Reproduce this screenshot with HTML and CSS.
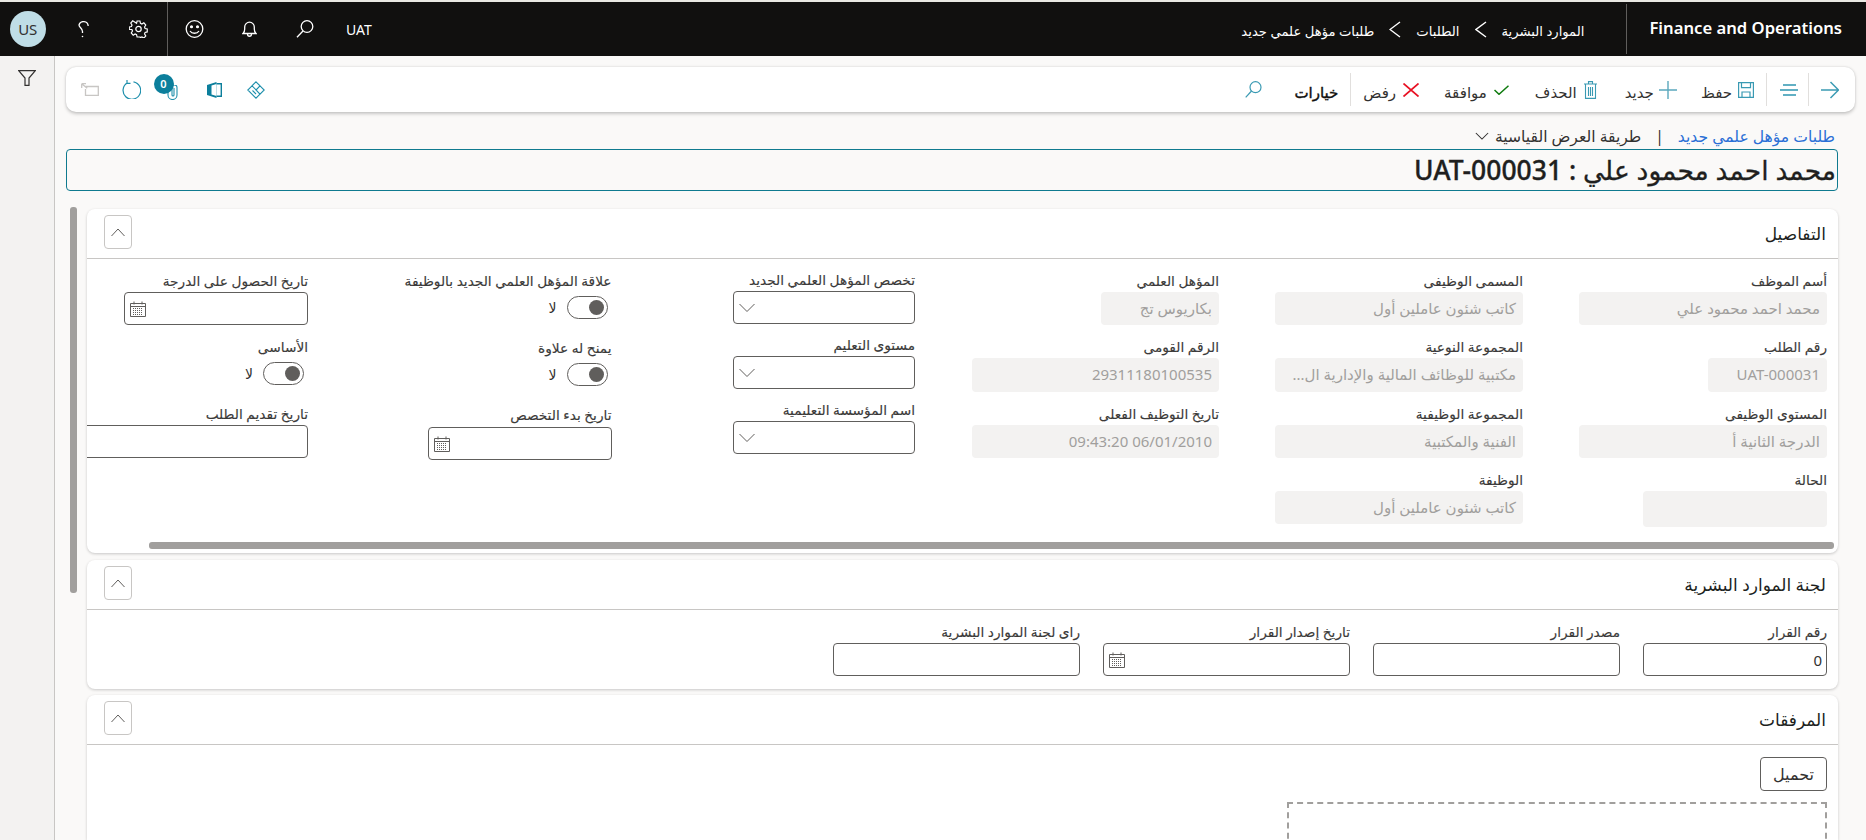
FILE: index.html
```html
<!DOCTYPE html>
<html lang="ar" dir="rtl">
<head>
<meta charset="utf-8">
<title>طلبات مؤهل علمي جديد</title>
<link rel="stylesheet" href="styles.css">
</head>
<body>
<svg class="defs" width="0" height="0" aria-hidden="true">
  <symbol id="cal" viewBox="0 0 16 16"><path d="M.5 2.5h15v13H.5zM.5 5.5h15M4 .5v3M12 .5v3" fill="none" stroke="currentColor"/><path d="M3 7.5h10M3 9.5h10M3 11.5h10M3 13.5h10" fill="none" stroke="currentColor" stroke-dasharray="1 1"/></symbol>
  <symbol id="down" viewBox="0 0 16 10"><path d="M.5 1 8 8.5 15.5 1" fill="none" stroke="currentColor"/></symbol>
  <symbol id="up" viewBox="0 0 14 9"><path d="M.5 8 7 1l6.500 7" fill="none" stroke="currentColor"/></symbol>
</svg>

<header class="topbar">
  <div class="brand">Finance and Operations</div>
  <nav class="crumbs">
    <span>الموارد البشرية</span>
    <svg class="crumb-chev" viewBox="0 0 12 17"><path d="M11 1 1 8.500 11 16" fill="none" stroke="currentColor" stroke-width="1.400"/></svg>
    <span>الطلبات</span>
    <svg class="crumb-chev" viewBox="0 0 12 17"><path d="M11 1 1 8.500 11 16" fill="none" stroke="currentColor" stroke-width="1.400"/></svg>
    <span>طلبات مؤهل علمي جديد</span>
  </nav>
  <div class="sys">
    <span class="env">UAT</span>
    <span class="sys-cell"><svg width="18" height="18" viewBox="0 0 18 18" fill="none" stroke="currentColor" stroke-width="1.300"><circle cx="11" cy="6.500" r="5.800"/><path d="M7 11 1 17.300"/></svg></span>
    <span class="sys-cell"><svg width="15" height="16" viewBox="0 0 15 16" fill="none" stroke="currentColor" stroke-width="1.300"><path d="M1 12.500c1.400-1.200 1.700-2.500 1.700-4.500V6a4.800 4.800 0 0 1 9.600 0v2c0 2 .3 3.300 1.700 4.500zM5.500 13c0 3 4 3 4 0"/></svg></span>
    <span class="sys-cell sys-rule"><svg width="19" height="18" viewBox="0 0 19 18" fill="none" stroke="currentColor" stroke-width="1.300"><circle cx="9.500" cy="9" r="8.300"/><circle cx="6.500" cy="6.800" r=".9" fill="currentColor"/><circle cx="12.500" cy="6.800" r=".9" fill="currentColor"/><path d="M5 11c2 3 7 3 9 0"/></svg></span>
    <span class="sys-cell"><svg width="19" height="18" viewBox="0 0 19 18" fill="none" stroke="currentColor" stroke-width="1.200"><circle cx="9.500" cy="9" r="2.700"/><path d="M8 1h3l.5 2.300 1.500.7 2-1.200 2 2.200-1.300 2 .6 1.500 2.200.5v2.900l-2.200.5-.6 1.500 1.300 2-2 2.200-2-1.200-1.500.7L11 17H8l-.5-2.300-1.500-.7-2 1.200-2-2.200 1.300-2-.6-1.500L0 9.500V7l2.200-.5.6-1.500-1.300-2 2-2.200 2 1.200L7.500 3.300z" transform="translate(.3 0) scale(.97 1)"/></svg></span>
    <span class="sys-cell"><svg width="11" height="17" viewBox="0 0 11 17" fill="none" stroke="currentColor" stroke-width="1.300"><path d="M10.200 5A4.700 4.700 0 0 0 1 4c0 2.500 3.500 3.300 3.500 6.500V12"/><circle cx="4.500" cy="15.500" r=".8" fill="currentColor" stroke="none"/></svg></span>
    <span class="sys-cell"><span class="avatar">US</span></span>
  </div>
</header>

<div class="app">
  <main class="main">
    <div class="toolbar">
      <svg class="ti" width="18" height="18" viewBox="0 0 18 18" fill="none" stroke="#3a9ab3" stroke-width="1.500"><path d="M0 9h17M9.500 1 17.500 9l-8 8"/></svg>
      <span class="tb-rule r1"></span>
      <svg class="ti" width="18" height="12" viewBox="0 0 18 12" fill="none" stroke="#2f97b1" stroke-width="1.300"><path d="M3 1h13M0 6h18M3 11h13"/></svg>
      <span class="tb-rule r2"></span>
      <button class="tb-btn b-save"><svg width="16" height="16" viewBox="0 0 16 16" fill="none" stroke="#3a9ab3" stroke-width="1.200"><path d="M.6.6h14.800v14.800H.6z"/><path d="M3.500.6v5h9v-5M4 15.400V10h8v5.400"/></svg><span class="t-save">حفظ</span></button>
      <button class="tb-btn b-new"><svg width="18" height="18" viewBox="0 0 18 18" fill="none" stroke="#5ba8bd" stroke-width="1.400"><path d="M9 0v18M0 9h18"/></svg><span class="t-new">جديد</span></button>
      <button class="tb-btn b-del"><svg width="13" height="18" viewBox="0 0 13 18" fill="none" stroke="#3a9ab3" stroke-width="1.100"><path d="M0 3h13M4.500 3V.6h4V3M1.500 3v14.400h10V3M4.500 6v9M6.500 6v9M8.500 6v9"/></svg><span class="t-del">الحذف</span></button>
      <button class="tb-btn b-ok"><svg width="15" height="10" viewBox="0 0 15 10" fill="none" stroke="#107c10" stroke-width="1.500"><path d="M.5 5 5 9.300 14.500.7"/></svg><span class="t-ok">موافقة</span></button>
      <button class="tb-btn b-no"><svg width="16" height="14" viewBox="0 0 16 14" fill="none" stroke="#e81123" stroke-width="1.700"><path d="M.5.500l15 13M15.500.500l-15 13"/></svg><span class="t-no">رفض</span></button>
      <span class="tb-rule r3"></span>
      <span class="t-opts">خيارات</span>
      <svg class="ti tb-find" width="17" height="17" viewBox="0 0 17 17" fill="none" stroke="#3a9ab3" stroke-width="1.200"><circle cx="10.500" cy="6.200" r="5.500"/><path d="M6.500 10 .7 16.300"/></svg>

      <div class="tb-left">
        <span class="tb-cell"><svg width="18" height="18" viewBox="0 0 18 18" fill="none" stroke="#1e8fac" stroke-width="1.100"><path d="M9 .8 13 4.800 9 8.800 5 4.800zM13 4.800l4.200 4.200-4.200 4.200-4-4.200zM5 4.800.8 9 9 17.200l4-4"/><path d="M5.500 9.500 9 13"/></svg></span>
        <span class="tb-cell"><svg width="15" height="16" viewBox="0 0 15 16"><path d="M0 3 9.500 0v16L0 13z" fill="#0c7f9c"/><path d="M4.500 3.500 9.500 2v12l-5-1.500z" fill="#fff"/><path d="M9.500 1.800h4.800v12.400H9.500" fill="none" stroke="#0c7f9c" stroke-width="1.400"/></svg></span>
        <span class="tb-cell clip-cell">
          <svg class="clip" width="11" height="15" viewBox="0 0 11 15" fill="none" stroke="#1e8fac" stroke-width="1.100"><path d="M1 2v8a4.300 4.300 0 0 0 9 0V2.500a2.400 2.400 0 0 0-5 0V10a1 1 0 0 0 2 0V3"/></svg>
          <span class="badge">0</span>
        </span>
        <span class="tb-cell"><svg width="19" height="19" viewBox="0 0 19 19" fill="none" stroke="#1e8fac" stroke-width="1.200"><path d="M5.500 2.800a8.800 8.800 0 1 0 6-1M5 0v3.300h3.500"/></svg></span>
        <span class="tb-cell"><svg width="18" height="13" viewBox="0 0 18 13" fill="none" stroke="#c8c6c4" stroke-width="1.300"><path d="M4.500 3.500H17.300v9H4.500V6M.7.700l5.500 4.500M.7.700h4.300M.7.700V5"/></svg></span>
      </div>
    </div>

    <div class="trail">
      <a class="trail-link">طلبات مؤهل علمي جديد</a>
      <span class="trail-sep">|</span>
      <span class="trail-view">طريقة العرض القياسية</span>
      <svg class="trail-chev" viewBox="0 0 16 10"><path d="M1 1l7 7 7-7" fill="none" stroke="currentColor" stroke-width="1.200"/></svg>
    </div>
    <h1 class="title">محمد احمد محمود علي : UAT-000031</h1>

    <div class="work">
      <div class="cards">
        <section class="card">
          <div class="card-head"><h2>التفاصيل</h2><button class="collapse"><svg width="14" height="9"><use href="#up"/></svg></button></div>
          <div class="detail-grid">
            <div class="col">
              <div class="field"><label>أسم الموظف</label><div class="ro w248">محمد احمد محمود علي</div></div>
              <div class="field"><label>رقم الطلب</label><div class="ro w119">UAT-000031</div></div>
              <div class="field"><label>المستوى الوظيفى</label><div class="ro w248">الدرجة الثانية أ</div></div>
              <div class="field"><label>الحالة</label><div class="ro w184 tall"></div></div>
            </div>
            <div class="col">
              <div class="field"><label>المسمى الوظيفى</label><div class="ro w248">كاتب شئون عاملين أول</div></div>
              <div class="field"><label>المجموعة النوعية</label><div class="ro w248">مكتبية للوظائف المالية والإدارية ال...</div></div>
              <div class="field"><label>المجموعة الوظيفية</label><div class="ro w248">الفنية والمكتبية</div></div>
              <div class="field"><label>الوظيفة</label><div class="ro w248">كاتب شئون عاملين أول</div></div>
            </div>
            <div class="col">
              <div class="field"><label>المؤهل العلمي</label><div class="ro w118">بكاريوس تج</div></div>
              <div class="field"><label>الرقم القومى</label><div class="ro w247">29311180100535</div></div>
              <div class="field"><label>تاريخ التوظيف الفعلى</label><div class="ro w247">06/01/2010 09:43:20</div></div>
            </div>
            <div class="col col-tight">
              <div class="field"><label>تخصص المؤهل العلمي الجديد</label><div class="input w182"><svg class="i-down" width="16" height="10"><use href="#down"/></svg></div></div>
              <div class="field"><label>مستوى التعليم</label><div class="input w182"><svg class="i-down" width="16" height="10"><use href="#down"/></svg></div></div>
              <div class="field"><label>اسم المؤسسة التعليمية</label><div class="input w182"><svg class="i-down" width="16" height="10"><use href="#down"/></svg></div></div>
            </div>
            <div class="col">
              <div class="field tg"><label>علاقة المؤهل العلمي الجديد بالوظيفة</label><div class="toggle-row"><span class="toggle"><i></i></span><span>لا</span></div></div>
              <div class="field tg"><label>يمنح له علاوة</label><div class="toggle-row"><span class="toggle"><i></i></span><span>لا</span></div></div>
              <div class="field"><label>تاريخ بدء التخصص</label><div class="input w184 nudge"><svg class="i-cal" width="16" height="16"><use href="#cal"/></svg></div></div>
            </div>
            <div class="col">
              <div class="field"><label>تاريخ الحصول على الدرجة</label><div class="input w184"><svg class="i-cal" width="16" height="16"><use href="#cal"/></svg></div></div>
              <div class="field tg"><label>الأساسى</label><div class="toggle-row"><span class="toggle"><i></i></span><span>لا</span></div></div>
              <div class="field"><label>تاريخ تقديم الطلب</label><div class="input w247"></div></div>
            </div>
          </div>
          <div class="hbar"></div>
        </section>

        <section class="card">
          <div class="card-head"><h2>لجنة الموارد البشرية</h2><button class="collapse"><svg width="14" height="9"><use href="#up"/></svg></button></div>
          <div class="hr-row">
            <div class="field"><label>رقم القرار</label><div class="input w184 num">0</div></div>
            <div class="field"><label>مصدر القرار</label><div class="input w247"></div></div>
            <div class="field"><label>تاريخ إصدار القرار</label><div class="input w247"><svg class="i-cal" width="16" height="16"><use href="#cal"/></svg></div></div>
            <div class="field"><label>راى لجنة الموارد البشرية</label><div class="input w247"></div></div>
          </div>
        </section>

        <section class="card card-last">
          <div class="card-head"><h2>المرفقات</h2><button class="collapse"><svg width="14" height="9"><use href="#up"/></svg></button></div>
          <div class="attach">
            <button class="upload">تحميل</button>
            <div class="dropzone"></div>
          </div>
        </section>
      </div>
      <div class="vbar"></div>
    </div>
  </main>

  <aside class="rail">
    <svg width="18" height="16" viewBox="0 0 18 16" fill="none" stroke="#323130" stroke-width="1.200"><path d="M.7.600h16.600L11 8v7.400L7 15.400V8z"/></svg>
  </aside>
</div>
</body>
</html>
```

FILE: styles.css
```css
* { box-sizing: border-box; }
html, body { margin: 0; height: 100%; overflow: hidden; }
body {
  background: #e9e8e3;
  padding-top: 2px;
  font-family: "Noto Sans", "Open Sans", "DejaVu Sans", sans-serif;
  color: #323130;
  display: flex;
  flex-direction: column;
}
.defs { position: absolute; }
button { font: inherit; color: inherit; background: none; border: 0; padding: 0; }

/* top bar */
.topbar {
  flex: none;
  height: 54px;
  background: #11100f;
  color: #fff;
  display: flex;
  align-items: center;
}
.brand {
  padding: 0 24px 0 22px;
  height: 50px;
  line-height: 48px;
  font-size: 16.650px;
  font-weight: 600;
  border-left: 1px solid #605e5c;
  white-space: nowrap;
}
.crumbs {
  margin-right: 42px;
  display: flex;
  align-items: center;
  gap: 15px;
  font-size: 13.200px;
  padding-top: 3px;
}
.crumb-chev { width: 12px; height: 17px; margin-top: -3px; }
.sys { margin-right: auto; display: flex; align-items: center; height: 100%; }
.env { font-size: 14px; margin-left: 13px; }
.sys-cell {
  width: 55.5px;
  height: 100%;
  display: flex;
  align-items: center;
  justify-content: center;
}
.sys-rule { position: relative; }
.sys-rule::before { content: ""; position: absolute; left: 0; top: 0; bottom: 0; width: 1px; background: #605e5c; }
.avatar {
  width: 36px; height: 36px; border-radius: 50%;
  background: #bfdde6; color: #323130;
  display: flex; align-items: center; justify-content: center;
  font-size: 15px;
}

/* shell */
.app { flex: 1; min-height: 0; display: flex; background: #faf9f8; }
.rail {
  flex: none; width: 55px;
  background: #f3f2f1;
  border-right: 1px solid #c8c6c4;
  display: flex; justify-content: center; align-items: flex-start;
  padding-top: 14px;
}
.main { flex: 1; min-width: 0; display: flex; flex-direction: column; padding-top: 11px; }

/* toolbar */
.toolbar {
  flex: none;
  height: 45px;
  margin: 0 11px;
  padding: 0 16px 0 3px;
  background: #fff;
  border-radius: 10px;
  box-shadow: 0 1.600px 3.600px rgba(0,0,0,.2), 0 0 2px rgba(0,0,0,.1);
  display: flex;
  align-items: center;
  font-size: 15px;
}
.ti { flex: none; }
.tb-rule { flex: none; width: 1px; height: 33px; background: #e1dfdd; }
.r1 { margin: 0 12px 0 10px; }
.r2 { margin: 0 13px 0 12px; }
.r3 { margin: 0 12px; }
.tb-btn { display: flex; align-items: center; flex: none; }
.tb-btn span { display: block; text-align: center; padding-top: 4px; white-space: nowrap; }
.b-save { gap: 6px; }
.b-new { margin-right: 24px; gap: 5px; }
.b-del { margin-right: 28px; gap: 7px; }
.b-ok { margin-right: 26px; gap: 7px; }
.b-no { margin-right: 25px; gap: 7px; }
.t-opts { font-weight: 500; color: #11100f; padding-top: 4px; -webkit-text-stroke: .4px #11100f; }
.tb-find { margin-right: 32px; }
.tb-left { margin-right: auto; display: flex; align-items: center; }
.tb-cell {
  width: 41.500px; height: 30px;
  display: flex; align-items: center; justify-content: center;
  position: relative;
}
.clip-cell .clip { margin-top: 6px; }
.badge {
  position: absolute; right: 20px; top: -1px;
  width: 20px; height: 20px; border-radius: 50%;
  background: #0c7f9c; color: #fff;
  font-size: 11px; font-weight: 600;
  display: flex; align-items: center; justify-content: center;
}

/* heading */
.trail {
  flex: none;
  height: 37px;
  margin: 0 31px 0 0;
  padding-top: 11px;
  display: flex;
  align-items: center;
  font-size: 15.600px;
  color: #323130;
}
.trail-link { color: #2b6fd6; }
.trail-sep { margin: 0 14px; }
.trail-chev { width: 14px; height: 9px; margin-right: 6px; }
.title {
  flex: none;
  height: 42px;
  margin: 0 28px 0 0;
  width: 1772px;
  border: 1px solid #0f7a8f;
  border-radius: 4px;
  padding: 0 1px 0 0;
  font-size: 26.500px;
  font-weight: 500;
  line-height: 40px;
  color: #201f1e;
  -webkit-text-stroke: .3px #201f1e;
}

/* cards */
.work {
  flex: 1; min-height: 0;
  margin: 18px 28px 0 0;
  width: 1772px;
  display: flex;
  overflow: visible;
}
.cards { flex: 1; min-width: 0; display: flex; flex-direction: column; }
.vbar {
  flex: none; width: 7px; height: 386px;
  margin: -2px 10px 0 4px;
  background: #a19f9d;
  border-radius: 3px;
}
.card {
  flex: none;
  background: #fff;
  border-radius: 8px;
  box-shadow: 0 1px 3px rgba(0,0,0,.2);
  margin-bottom: 7px;
}
.card + .card + .card { margin-top: -1px; }
.card-last { flex: 1; margin-bottom: 0; border-radius: 8px 8px 0 0; overflow: hidden; }
.card-head {
  height: 50px;
  border-bottom: 1px solid #c8c6c4;
  display: flex;
  align-items: center;
  justify-content: space-between;
  padding: 0 12px 0 17px;
}
.card-head h2 { margin: 0; font-size: 17px; font-weight: 500; color: #201f1e; }
.collapse {
  width: 28px; height: 34px;
  margin-top: -3px;
  border: 1px solid #c8c6c4;
  border-radius: 4px;
  display: flex; align-items: center; justify-content: center;
  color: #605e5c;
}

.detail-grid {
  height: 283px;
  padding: 14px 11px 0 0;
  display: grid;
  grid-template-columns: repeat(3, 304px) 303.500px 303.500px 304px;
  overflow: hidden;
}
.col { display: flex; flex-direction: column; gap: 14px; }
.col-tight { gap: 13px; margin-top: -1px; }
.field { display: flex; flex-direction: column; align-items: flex-start; }
.field label { height: 19px; line-height: 15px; font-size: 13.700px; font-weight: 500; white-space: nowrap; color: #3b3a39; -webkit-text-stroke: .15px #3b3a39; }
.ro {
  height: 33.300px;
  background: #f3f2f1;
  border-radius: 4px;
  padding: 0 7px;
  font-size: 15px;
  line-height: 33px;
  color: #a19f9d;
  white-space: nowrap;
  overflow: hidden;
}
.tall { height: 36px; }
.input {
  height: 33px;
  border: 1px solid #605e5c;
  border-radius: 4px;
  background: #fff;
  display: flex;
  align-items: center;
  justify-content: flex-end;
  padding-left: 5px;
  flex: none;
}
.nudge { margin-top: 1px; }
.num { justify-content: flex-start; padding: 0 4px; font-size: 15px; }
.w247 { width: 247px; }
.w248 { width: 248px; }
.w184 { width: 184px; }
.w182 { width: 182px; }
.w119 { width: 119px; }
.w118 { width: 118px; }
.i-cal { color: #605e5c; }
.i-down { color: #605e5c; }
.tg { padding-bottom: 7px; }
.toggle-row { margin-top: 4px; margin-right: 4px; height: 23px; display: flex; align-items: center; gap: 10px; font-size: 14px; }
.toggle {
  width: 41px; height: 23px;
  border: 1px solid #605e5c;
  border-radius: 12px;
  display: flex;
  align-items: center;
  padding: 0 3px;
}
.toggle i { width: 15px; height: 15px; border-radius: 50%; background: #605e5c; }
.hbar {
  height: 7px;
  margin: 0 4px 4px 62px;
  background: #a19f9d;
  border-radius: 3px;
}

.hr-row {
  height: 79px;
  padding: 14px 11px 0 0;
  display: flex;
  gap: 23px;
}
.attach { padding: 12px 11px 0 0; display: flex; flex-direction: column; align-items: flex-start; }
.upload {
  width: 67px; height: 34px;
  border: 1px solid #605e5c;
  border-radius: 4px;
  font-size: 16px;
}
.dropzone {
  width: 540px; height: 200px;
  margin-top: 11px;
  border: 2px dashed #a19f9d;
}
```
